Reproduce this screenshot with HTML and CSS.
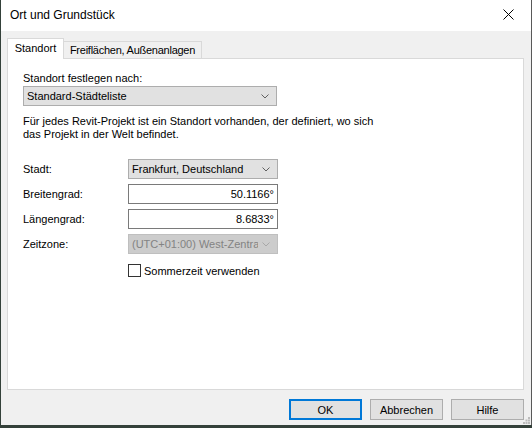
FILE: index.html
```html
<!DOCTYPE html>
<html lang="de">
<head>
    <meta charset="UTF-8">
    <meta name="viewport" content="width=device-width, initial-scale=1.0">
    <title>Ort und Grundstück</title>
    <link rel="stylesheet" href="styles.css">
</head>
<body>
    <div class="window">
        <div class="titlebar">
            <span class="title">Ort und Grundstück</span>
            <span class="close-btn">
                <svg width="11" height="11" viewBox="0 0 11 11"><path d="M0.5 0.5 L10.5 10.5 M10.5 0.5 L0.5 10.5" stroke="#000" stroke-width="1" fill="none"/></svg>
            </span>
        </div>

        <div class="content">
            <div class="tabs">
                <div class="tab active">Standort</div>
                <div class="tab">Freiflächen, Außenanlagen</div>
            </div>

            <div class="panel">
                <div class="field-label">Standort festlegen nach:</div>
                <div class="select wide">
                    <span>Standard-Städteliste</span>
                    <svg class="chevron" width="8" height="5" viewBox="0 0 8 5"><path d="M0.5 0.5 L4 4 L7.5 0.5" stroke="#606060" fill="none"/></svg>
                </div>

                <p class="info">Für jedes Revit-Projekt ist ein Standort vorhanden, der definiert, wo sich<br>das Projekt in der Welt befindet.</p>

                <div class="form-grid">
                    <span class="row-label">Stadt:</span>
                    <div class="select">
                        <span>Frankfurt, Deutschland</span>
                        <svg class="chevron" width="8" height="5" viewBox="0 0 8 5"><path d="M0.5 0.5 L4 4 L7.5 0.5" stroke="#606060" fill="none"/></svg>
                    </div>

                    <span class="row-label">Breitengrad:</span>
                    <div class="text-input">50.1166°</div>

                    <span class="row-label">Längengrad:</span>
                    <div class="text-input">8.6833°</div>

                    <span class="row-label">Zeitzone:</span>
                    <div class="select disabled">
                        <span class="clip">(UTC+01:00) West-Zentra</span>
                        <svg class="chevron" width="8" height="5" viewBox="0 0 8 5"><path d="M0.5 0.5 L4 4 L7.5 0.5" stroke="#a8a8a8" fill="none"/></svg>
                    </div>

                    <span></span>
                    <div class="check">
                        <span class="box"></span>
                        <span>Sommerzeit verwenden</span>
                    </div>
                </div>
            </div>

            <div class="buttons">
                <button class="btn default">OK</button>
                <button class="btn">Abbrechen</button>
                <button class="btn">Hilfe</button>
            </div>
        </div>

        <!-- size grip in the lower right corner -->
        <svg class="grip" width="7" height="7" viewBox="0 0 7 7">
            <rect x="5" y="0" width="2" height="2" fill="#bcbcbc"/>
            <rect x="2.5" y="2.5" width="2" height="2" fill="#bcbcbc"/>
            <rect x="5" y="2.5" width="2" height="2" fill="#bcbcbc"/>
            <rect x="0" y="5" width="2" height="2" fill="#bcbcbc"/>
            <rect x="2.5" y="5" width="2" height="2" fill="#bcbcbc"/>
            <rect x="5" y="5" width="2" height="2" fill="#bcbcbc"/>
        </svg>
    </div>
</body>
</html>
```

FILE: styles.css
```css
:root {
    --dialog-bg: #f0f0f0;
    --tab-border: #d9d9d9;
    --control-bg: #e1e1e1;
    --control-border: #adadad;
    --accent: #0078d7;
}

body {
    margin: 0;
    background-color: #34413a;
    font-family: 'Segoe UI', 'Liberation Sans', Arial, sans-serif;
    font-size: 11px;
    color: #000;
}

.window {
    position: relative;
    width: 530px;
    height: 425px;
    margin-left: 1px;
    background-color: var(--dialog-bg);
    border-right: 1px solid #595959;
    display: flex;
    flex-direction: column;
}

.titlebar {
    height: 31px;
    background-color: #fff;
    display: flex;
    align-items: center;
    justify-content: space-between;
    padding: 0 17px 0 9px;
}

.title {
    font-size: 12px;
    padding-bottom: 1px;
}

.close-btn {
    display: flex;
    padding-bottom: 2px;
}

.content {
    padding: 7px 7px 0 6px;
}

.tabs {
    display: flex;
    align-items: flex-end;
    height: 20px;
}

.tab {
    box-sizing: border-box;
    width: 138px;
    height: 17px;
    line-height: 16px;
    text-align: center;
    letter-spacing: -0.25px;
    white-space: nowrap;
    background-color: var(--dialog-bg);
    border-top: 1px solid var(--tab-border);
    border-right: 1px solid var(--tab-border);
}

.tab.active {
    position: relative;
    z-index: 1;
    width: 57px;
    height: 21px;
    line-height: 19px;
    margin-bottom: -1px;
    letter-spacing: 0;
    background-color: #fff;
    border-left: 1px solid var(--tab-border);
}

.panel {
    height: 318px;
    background-color: #fff;
    border: 1px solid var(--tab-border);
    padding: 12px 15px 0;
}

.field-label {
    line-height: 15px;
}

.select {
    box-sizing: border-box;
    height: 20px;
    display: flex;
    align-items: center;
    justify-content: space-between;
    padding: 0 7px 0 3px;
    background-color: var(--control-bg);
    border: 1px solid var(--control-border);
    white-space: nowrap;
}

.select .clip {
    overflow: hidden;
}

.select.wide {
    width: 254px;
}

.select.disabled {
    background-color: #cccccc;
    border-color: #bfbfbf;
    color: #838383;
}

.chevron {
    flex-shrink: 0;
    margin-left: 4px;
}

.info {
    margin: 9px 0 0;
    line-height: 13px;
}

.form-grid {
    display: grid;
    grid-template-columns: 105px 150px;
    grid-auto-rows: 20px;
    row-gap: 5px;
    margin-top: 18px;
    align-items: center;
}

.text-input {
    box-sizing: border-box;
    height: 20px;
    line-height: 18px;
    padding-right: 3px;
    text-align: right;
    background-color: #fff;
    border: 1px solid #7a7a7a;
}

.check {
    display: flex;
    align-items: center;
    gap: 3px;
    margin-top: 3px;
}

.box {
    box-sizing: border-box;
    width: 13px;
    height: 13px;
    background-color: #fff;
    border: 1px solid #333;
}

.buttons {
    display: flex;
    justify-content: flex-end;
    gap: 8px;
    margin-top: 9px;
}

.btn {
    box-sizing: border-box;
    width: 73px;
    height: 21px;
    padding: 0;
    font-family: inherit;
    font-size: 11px;
    color: #000;
    background-color: var(--control-bg);
    border: 1px solid var(--control-border);
}

.btn.default {
    border: 2px solid var(--accent);
}

.grip {
    position: absolute;
    right: 1px;
    bottom: 1px;
}
```
